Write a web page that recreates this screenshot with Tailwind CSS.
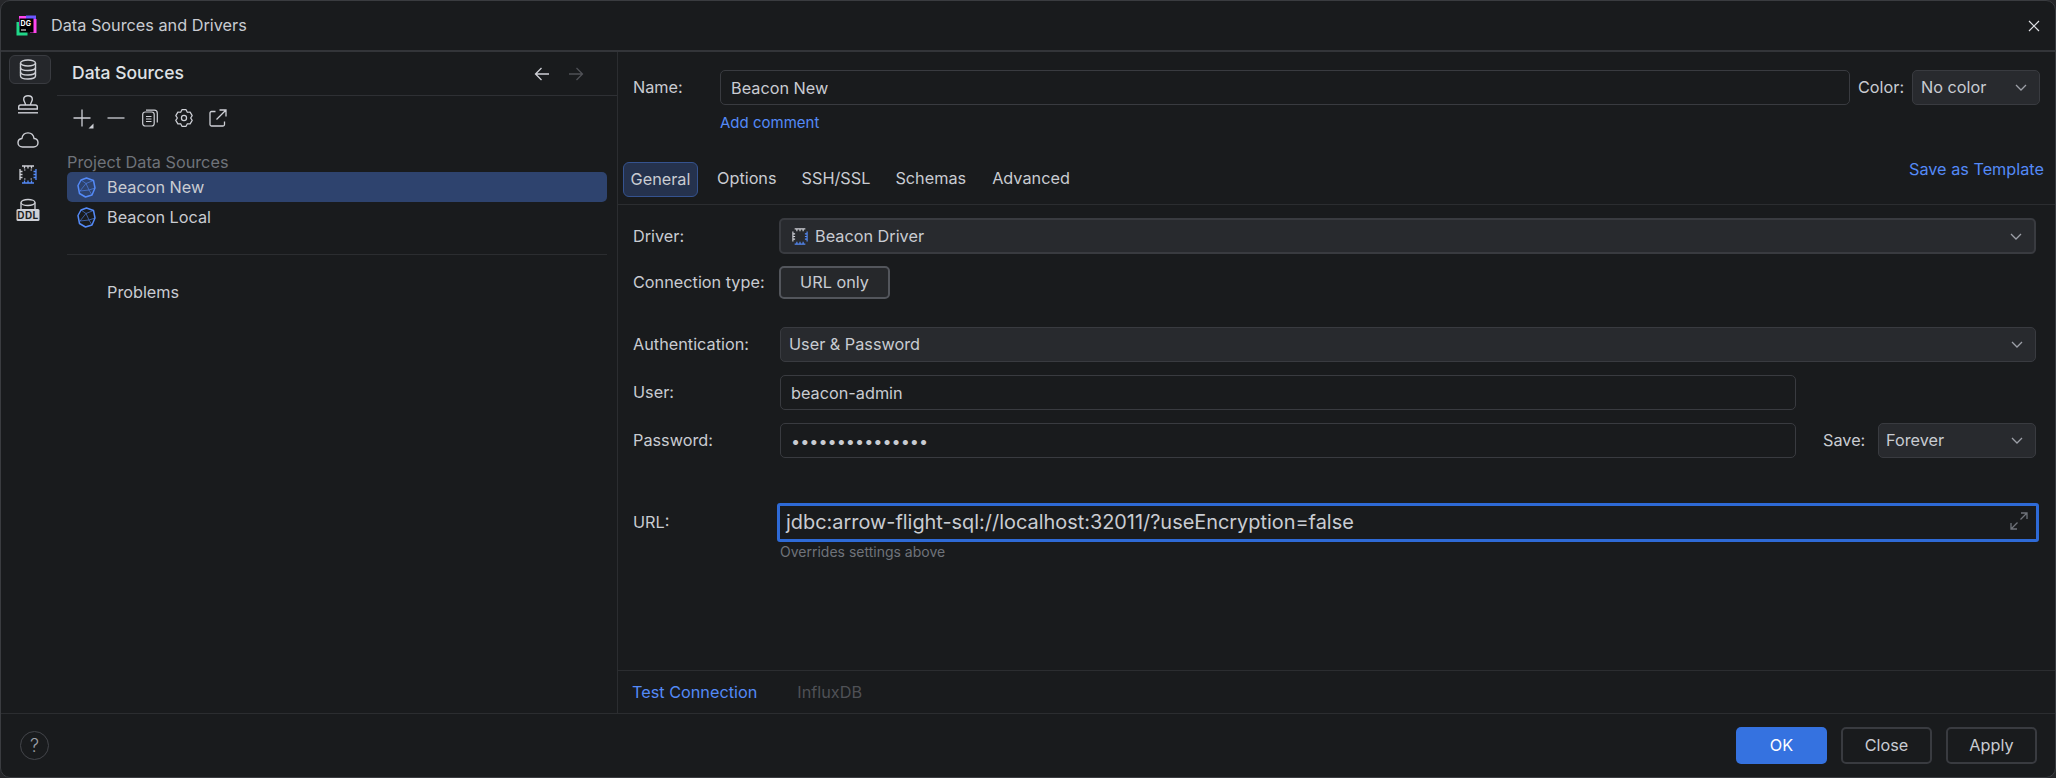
<!DOCTYPE html>
<html lang="en">
  <head>
    <meta charset="UTF-8" />
    <title>Data Sources and Drivers</title>
    <script src="https://cdn.jsdelivr.net/npm/@tailwindcss/browser@4"></script>
  </head>
  <body class="bg-[#26272a] overflow-hidden">
    <div class="w-[2056px] h-[778px] flex flex-col bg-[#191b1d] border border-[#3a3c40] rounded-[10px] text-[16.25px] text-[#c9ccd2] font-['Inter','Liberation_Sans',sans-serif]">

      <!-- title bar -->
      <div class="h-[51px] shrink-0 flex items-center border-b-2 border-[#333539] pl-[15px] pr-[15px]">
        <svg width="21" height="21" viewBox="0 0 21 21">
          <rect x="0.5" y="7" width="11" height="13.5" fill="#21d789" />
          <rect x="3" y="1" width="13" height="10" fill="#ff45ed" />
          <rect x="10" y="0.5" width="10" height="12" fill="#6b57ff" />
          <rect x="14" y="4" width="6.5" height="14" fill="#ff45ed" />
          <rect x="3.5" y="3.5" width="14" height="14" fill="#000" />
          <text x="4.6" y="11" font-size="7" font-weight="700" fill="#fff" font-family="Inter">DG</text>
          <rect x="5" y="14.5" width="5" height="1" fill="#fff" />
        </svg>
        <span class="ml-[14px]">Data Sources and Drivers</span>
        <svg class="ml-auto" width="12" height="12" viewBox="0 0 12 12" fill="none" stroke="#dfe1e5" stroke-width="1.2"><path d="M1 1l10 10M11 1L1 11" /></svg>
      </div>

      <div class="flex-1 flex min-h-0">
        <!-- tool window strip -->
        <div class="w-[56px] shrink-0 flex flex-col">
          <div class="h-[35px] flex items-center">
            <div class="ml-[8px] w-[42px] h-[29px] rounded-[6px] bg-[#25272b] border border-[#393b40] flex items-center justify-center pr-[5px]">
              <svg width="18" height="21" viewBox="0 0 18 21" fill="none" stroke="#ced0d6" stroke-width="1.4">
                <ellipse cx="9" cy="4" rx="7.5" ry="3" />
                <path d="M1.5 4v13c0 1.7 3.4 3 7.5 3s7.500-1.300 7.500-3V4" />
                <path d="M1.500 8.500c0 1.700 3.400 3 7.500 3s7.500-1.300 7.500-3M1.500 13c0 1.700 3.400 3 7.500 3s7.500-1.300 7.500-3" />
              </svg>
            </div>
          </div>
          <div class="h-[35px] flex items-center pl-[16px]">
            <svg width="22" height="19" viewBox="0 0 22 19" fill="none" stroke="#ced0d6" stroke-width="1.4">
              <path d="M8.500 10c0-2.500-1.800-3.500-1.800-5.800C6.700 2 8.500.8 11 .8s4.300 1.200 4.300 3.400c0 2.300-1.800 3.300-1.800 5.800" />
              <path d="M1.700 14v-2c0-1.100.9-2 2-2h14.600c1.100 0 2 .9 2 2v2z" />
              <path d="M1 17.800h20" />
            </svg>
          </div>
          <div class="h-[35px] flex items-center pl-[16px]">
            <svg width="22" height="16" viewBox="0 0 22 16" fill="none" stroke="#ced0d6" stroke-width="1.4">
              <path d="M5.500 15h11c2.500 0 4.500-1.900 4.500-4.300 0-2.200-1.700-4-3.900-4.200C16.500 3.200 14 .9 11 .9 7.900.9 5.400 3.200 4.900 6.500 2.700 6.800 1 8.500 1 10.700 1 13.100 3 15 5.500 15z" />
            </svg>
          </div>
          <div class="h-[35px] flex items-center pl-[18px]">
            <svg width="18" height="19" viewBox="0 0 18 19" fill="none" stroke-width="1.300">
              <path d="M3 1h12M5.500 1v2.500M9 1v2.500M12.500 1v2.500M1 4v11M1 6.500h2.500M1 9.500h2.500M1 12.500h2.500" stroke="#ced0d6" />
              <path d="M5 5h1.500M11.500 5H13M5 14h1.500M11.500 14H13" stroke="#8a8d94" stroke-dasharray="1.500 1.500" />
              <path d="M17 4v11M17 6.500h-2.500M17 9.500h-2.500M17 12.500h-2.500M3 18h12M5.500 18v-2.500M9 18v-2.500M12.500 18v-2.500" stroke="#548af7" />
            </svg>
          </div>
          <div class="h-[35px] flex items-center pl-[15px]">
            <svg width="24" height="24" viewBox="0 0 24 24" fill="none">
              <ellipse cx="12" cy="4.500" rx="7" ry="3" stroke="#ced0d6" stroke-width="1.300" />
              <path d="M5 4.500v7M19 4.500v7" stroke="#ced0d6" stroke-width="1.300" />
              <rect x="0.500" y="11" width="23" height="12" rx="1.500" fill="#ced0d6" />
              <text x="12" y="20.500" text-anchor="middle" font-size="10" font-weight="700" fill="#1e1f22" font-family="Inter" letter-spacing="0.4">DDL</text>
            </svg>
          </div>
        </div>

        <!-- data sources list -->
        <div class="w-[560px] shrink-0 flex flex-col">
          <div class="h-[44px] shrink-0 flex items-center justify-between pl-[15px] pr-[33px] border-b border-[#2e3034]">
            <span class="text-[17.500px] font-medium text-[#dfe1e5]">Data Sources</span>
            <div class="flex items-center gap-[18px]">
              <svg width="16" height="14" viewBox="0 0 16 14" fill="none" stroke="#ced0d6" stroke-width="1.300"><path d="M15 7H1.500M7.500 1L1.500 7l6 6" /></svg>
              <svg width="16" height="14" viewBox="0 0 16 14" fill="none" stroke="#4f5156" stroke-width="1.300"><path d="M1 7h13.500M8.500 1l6 6-6 6" /></svg>
            </div>
          </div>
          <div class="h-[44px] shrink-0 flex items-center pl-[16px] gap-[16px]">
            <div class="relative w-[18px] h-[18px]">
              <svg width="18" height="18" viewBox="0 0 18 18" fill="none" stroke="#ced0d6" stroke-width="1.300"><path d="M9 0.500v17M.5 9h17" /></svg>
              <svg class="absolute left-[15px] top-[14px]" width="6" height="6" viewBox="0 0 6 6"><path d="M5.500 .5v5h-5z" fill="#ced0d6" /></svg>
            </div>
            <svg width="18" height="18" viewBox="0 0 18 18" fill="none" stroke="#ced0d6" stroke-width="1.300"><path d="M.5 9h17" /></svg>
            <svg width="18" height="18" viewBox="0 0 18 18" fill="none" stroke="#ced0d6" stroke-width="1.200"><rect x="1.700" y="3" width="11.500" height="14" rx="2.500" /><path d="M5 1.200h8.300c1.700 0 3 1.300 3 3v9.300M5 7.500h5.500M5 10h5.500M5 12.500h5.500" /></svg>
            <svg width="18" height="20" viewBox="-0.500 0 19 20" fill="none" stroke="#ced0d6" stroke-width="1.300" stroke-linejoin="round"><path d="M6.820 1.270H11.180L12.500 3.940 15.470 3.750 17.650 7.520 16 10 17.650 12.480 15.470 16.250 12.500 16.060 11.180 18.730H6.820L5.500 16.060 2.530 16.250.35 12.480 2 10 .35 7.520 2.530 3.750 5.500 3.940z" /><circle cx="9" cy="10" r="2.700" /></svg>
            <svg width="18" height="18" viewBox="0 0 18 18" fill="none" stroke="#ced0d6" stroke-width="1.300"><path d="M6.500 2.500H2.500c-.8 0-1.500.7-1.500 1.500v11.500c0 .8.7 1.500 1.500 1.500h11.500c.8 0 1.500-.7 1.500-1.500v-3M7.500 10.500L16.500 1.500M10.500 1h6.500v6.500" /></svg>
          </div>
          <div class="mt-[12px] ml-[10px] h-[20px] leading-[20px] text-[#6f737a]">Project Data Sources</div>
          <div class="mx-[10px] h-[30px] rounded-[5px] bg-[#2e436e] flex items-center pl-[10px]">
            <svg width="19" height="21" viewBox="0 0 19 21" fill="none" stroke="#548af7" stroke-width="1.500" stroke-linejoin="round"><path d="M4 3L9 6.500 16.500 3.500M9 6.500L3 14M9 6.500L12 13 15 18M3 14L12 13M12 13L18 11" stroke-width="0.600" /><path d="M9.500 1L16.500 3.500 18 11 15 18 8.500 20 2.500 16.500 1 8.500 4 3z" /></svg>
            <span class="ml-[11px]">Beacon New</span>
          </div>
          <div class="mx-[10px] h-[30px] flex items-center pl-[10px]">
            <svg width="19" height="21" viewBox="0 0 19 21" fill="none" stroke="#548af7" stroke-width="1.500" stroke-linejoin="round"><path d="M4 3L9 6.500 16.500 3.500M9 6.500L3 14M9 6.500L12 13 15 18M3 14L12 13M12 13L18 11" stroke-width="0.600" /><path d="M9.500 1L16.500 3.500 18 11 15 18 8.500 20 2.500 16.500 1 8.500 4 3z" /></svg>
            <span class="ml-[11px]">Beacon Local</span>
          </div>
          <div class="mt-[22px] mx-[10px] border-t border-[#2b2d30]"></div>
          <div class="mt-[27px] pl-[50px] leading-[20px]">Problems</div>
        </div>

        <!-- settings pane -->
        <div class="flex-1 min-w-0 flex flex-col border-l border-[#2b2d30]">
          <div class="flex items-center h-[35px] mt-[18px]">
            <label class="w-[102px] shrink-0 pl-[15px]">Name:</label>
            <input value="Beacon New" class="flex-1 min-w-0 h-full px-[10px] rounded-[5px] border border-[#393b40] bg-transparent outline-none" />
            <label class="ml-[8px] w-[54px] shrink-0">Color:</label>
            <div class="w-[128px] h-full mr-[15px] flex items-center justify-between pl-[8px] pr-[12px] rounded-[5px] border border-[#393b40] bg-[#282a2e]">
              <span>No color</span>
              <svg width="12" height="7" viewBox="0 0 12 7" fill="none" stroke="#9da0a8" stroke-width="1.300"><path d="M1 1l5 5 5-5" /></svg>
            </div>
          </div>
          <div class="mt-[8px] ml-[102px] h-[20px] leading-[20px] text-[15px] text-[#548af7]">Add comment</div>
          <div class="mt-[29px] pb-[7px] pl-[5px] pr-[11px] flex items-center border-b border-[#2b2d30]">
            <div class="h-[35px] w-[75px] flex items-center justify-center rounded-[6px] bg-[#25324d] border border-[#35538f]">General</div>
            <div class="ml-[19px] -mt-[2px]">Options</div>
            <div class="ml-[25px] -mt-[2px]">SSH/SSL</div>
            <div class="ml-[25px] -mt-[2px]">Schemas</div>
            <div class="ml-[26px] -mt-[2px]">Advanced</div>
            <div class="ml-auto -mt-[20px] text-[#548af7]">Save as Template</div>
          </div>

          <div class="mt-[13px] flex items-center h-[36px]">
            <label class="w-[161px] shrink-0 pl-[15px]">Driver:</label>
            <div class="flex-1 h-full mr-[19px] flex items-center justify-between pl-[11px] pr-[12px] rounded-[5px] border-2 border-[#393b40] bg-[#282a2e]">
              <div class="flex items-center gap-[7px]">
                <svg width="16" height="17" viewBox="0 0 18 19" fill="none" stroke-width="1.300">
                  <path d="M3 1h12M5.500 1v2.500M9 1v2.500M12.500 1v2.500M1 4v11M1 6.500h2.500M1 9.500h2.500M1 12.500h2.500" stroke="#ced0d6" />
                  <path d="M17 4v11M17 6.500h-2.500M17 9.500h-2.500M17 12.500h-2.500M3 18h12M5.500 18v-2.500M9 18v-2.500M12.500 18v-2.500" stroke="#548af7" />
                </svg>
                <span>Beacon Driver</span>
              </div>
              <svg width="12" height="7" viewBox="0 0 12 7" fill="none" stroke="#9da0a8" stroke-width="1.300"><path d="M1 1l5 5 5-5" /></svg>
            </div>
          </div>
          <div class="mt-[12px] flex items-center h-[33px]">
            <label class="w-[161px] shrink-0 pl-[15px]">Connection type:</label>
            <button class="w-[111px] h-full rounded-[5px] border-2 border-[#53565c] bg-[#26282b]">URL only</button>
          </div>
          <div class="mt-[28px] flex items-center h-[35px]">
            <label class="w-[162px] shrink-0 pl-[15px]">Authentication:</label>
            <div class="flex-1 h-full mr-[19px] flex items-center justify-between pl-[8px] pr-[12px] rounded-[5px] border border-[#393b40] bg-[#282a2e]">
              <span>User &amp; Password</span>
              <svg width="12" height="7" viewBox="0 0 12 7" fill="none" stroke="#9da0a8" stroke-width="1.300"><path d="M1 1l5 5 5-5" /></svg>
            </div>
          </div>
          <div class="mt-[13px] flex items-center h-[35px]">
            <label class="w-[162px] shrink-0 pl-[15px]">User:</label>
            <input value="beacon-admin" class="w-[1016px] h-full px-[10px] rounded-[5px] border border-[#393b40] bg-transparent outline-none" />
          </div>
          <div class="mt-[13px] flex items-center h-[35px]">
            <label class="w-[162px] shrink-0 pl-[15px]">Password:</label>
            <input type="password" value="aaaaaaaaaaaaaaa" class="w-[1016px] h-full px-[10px] rounded-[5px] border border-[#393b40] bg-transparent outline-none" />
            <label class="ml-[27px] w-[55px] shrink-0">Save:</label>
            <div class="flex-1 h-full mr-[19px] flex items-center justify-between pl-[7px] pr-[12px] rounded-[5px] border border-[#393b40] bg-[#282a2e]">
              <span>Forever</span>
              <svg width="12" height="7" viewBox="0 0 12 7" fill="none" stroke="#9da0a8" stroke-width="1.300"><path d="M1 1l5 5 5-5" /></svg>
            </div>
          </div>
          <div class="mt-[45px] flex items-center h-[39px]">
            <label class="w-[159px] shrink-0 pl-[15px]">URL:</label>
            <div class="flex-1 h-full mr-[16px] flex items-center justify-between pl-[6px] pr-[8px] rounded-[3px] border-[3px] border-[#2e6ad6]">
              <span class="text-[19.900px] text-[#c9ccd2]">jdbc:arrow-flight-sql://localhost:32011/?useEncryption=false</span>
              <svg class="-mt-[4px]" width="18" height="18" viewBox="0 0 18 18" fill="none" stroke="#6f737a" stroke-width="1.300"><path d="M17 1L10.500 7.500M7.500 10.500L1 17M11 1H17v6M1 11V17h6" /></svg>
            </div>
          </div>
          <div class="ml-[162px] h-[20px] leading-[20px] text-[14px] text-[#6f737a]">Overrides settings above</div>

          <div class="mt-auto h-[43px] shrink-0 flex items-center pl-[14px] border-t border-[#2b2d30]">
            <span class="text-[#548af7]">Test Connection</span>
            <span class="ml-[40px] text-[#4f5156]">InfluxDB</span>
          </div>
        </div>
      </div>

      <!-- footer -->
      <div class="h-[64px] shrink-0 flex items-center justify-between border-t border-[#2b2d30] pl-[19px] pr-[18px]">
        <div class="w-[29px] h-[29px] rounded-full border border-[#43454a] flex items-center justify-center text-[#9da0a8] text-[18px] font-light">?</div>
        <div class="flex items-center gap-[14px]">
          <button class="w-[91px] h-[37px] rounded-[5px] bg-[#3572e0] text-white">OK</button>
          <button class="w-[91px] h-[37px] rounded-[5px] border-2 border-[#393b40]">Close</button>
          <button class="w-[91px] h-[37px] rounded-[5px] border-2 border-[#393b40]">Apply</button>
        </div>
      </div>
    </div>
  </body>
</html>
